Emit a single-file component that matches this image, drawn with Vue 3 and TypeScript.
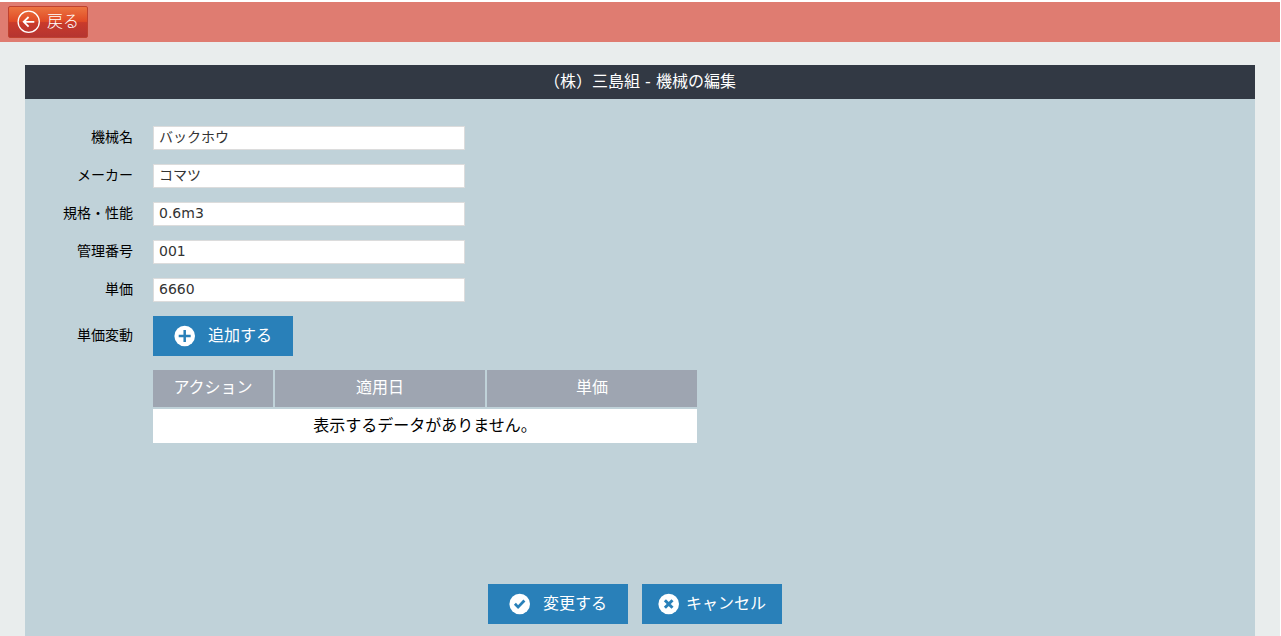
<script setup lang="ts">
import { reactive, ref } from 'vue'

interface Field {
  id: string
  label: string
  value: string
}

interface PriceChange {
  date: string
  price: string
}

const fields = reactive<Field[]>([
  { id: 'name', label: '機械名', value: 'バックホウ' },
  { id: 'maker', label: 'メーカー', value: 'コマツ' },
  { id: 'spec', label: '規格・性能', value: '0.6m3' },
  { id: 'number', label: '管理番号', value: '001' },
  { id: 'price', label: '単価', value: '6660' },
])

const changes = ref<PriceChange[]>([])
</script>

<template>
  <div class="page">
    <header class="topbar">
      <button type="button" class="back">
        <svg width="24" height="24" viewBox="0 0 24 24" fill="none" stroke="#fff" aria-hidden="true">
          <circle cx="11.7" cy="11.7" r="10.6" stroke-width="1.3" />
          <path d="M17.3 11.8H7M11.6 7L6.7 11.8l4.9 4.8" stroke-width="1.8" />
        </svg>
        <span>戻る</span>
      </button>
    </header>

    <main class="panel">
      <h1 class="title">（株）三島組 - 機械の編集</h1>
      <form class="form" @submit.prevent>
        <div class="fields">
          <div v-for="field in fields" :key="field.id" class="row">
            <label class="label" :for="field.id">{{ field.label }}</label>
            <input :id="field.id" v-model="field.value" class="input" type="text" />
          </div>
          <div class="row">
            <span id="changes-label" class="label">単価変動</span>
            <button type="button" class="button">
              <svg width="22" height="22" viewBox="0 0 22 22" aria-hidden="true">
                <circle cx="10.7" cy="11" r="10.3" fill="#fff" />
                <path d="M10.7 5v12M4.7 11h12" stroke="#2980b9" stroke-width="2.5" />
              </svg>
              <span>追加する</span>
            </button>
          </div>
          <table class="table" aria-labelledby="changes-label">
            <thead>
              <tr>
                <th class="action" scope="col">アクション</th>
                <th scope="col">適用日</th>
                <th scope="col">単価</th>
              </tr>
            </thead>
            <tbody>
              <tr v-for="(change, i) in changes" :key="i">
                <td></td>
                <td>{{ change.date }}</td>
                <td>{{ change.price }}</td>
              </tr>
              <tr v-if="changes.length === 0">
                <td colspan="3">表示するデータがありません。</td>
              </tr>
            </tbody>
          </table>
        </div>

        <div class="actions">
          <button type="submit" class="button">
            <svg width="22" height="22" viewBox="0 0 22 22" aria-hidden="true">
              <circle cx="10.7" cy="11" r="10.3" fill="#fff" />
              <path d="M5.9 10.8l3.2 3.3 6.3-6.6" fill="none" stroke="#2980b9" stroke-width="2.8" />
            </svg>
            <span>変更する</span>
          </button>
          <button type="button" class="button cancel">
            <svg width="22" height="22" viewBox="0 0 22 22" aria-hidden="true">
              <circle cx="10.7" cy="11" r="10.3" fill="#fff" />
              <path d="M6.9 7.2l7.6 7.6M14.5 7.2l-7.6 7.6" stroke="#2980b9" stroke-width="3" />
            </svg>
            <span>キャンセル</span>
          </button>
        </div>
      </form>
    </main>
  </div>
</template>

<style>
body {
  margin: 0;
  background: #fff;
}
</style>

<style scoped>
.page,
.page * {
  box-sizing: border-box;
}

.page {
  display: flex;
  flex-direction: column;
  min-height: 100vh;
  margin-right: 1px;
  border-top: 2px solid #fff;
  background: #e9eded;
  color: #000;
  font-family: "DejaVu Sans", "Noto Sans CJK JP", sans-serif;
  font-size: 16px;
  font-weight: 400;
  line-height: 24px;
}

button,
input {
  margin: 0;
  font: inherit;
}

.topbar {
  display: flex;
  align-items: center;
  height: 40px;
  padding: 0 8px;
  background: #df7c71;
}

.back {
  display: flex;
  align-items: center;
  gap: 6px;
  width: 80px;
  height: 32px;
  padding: 0 8px;
  border: 1px solid #c0412f;
  border-radius: 2px;
  background: linear-gradient(#ec7440 0%, #e04a26 48%, #c93a2b 52%, #b53531 100%);
  color: #fff;
  font-weight: 300;
}

.back svg,
.button svg {
  flex: none;
}

.back span {
  white-space: nowrap;
}

.panel {
  display: flex;
  flex: 1;
  flex-direction: column;
  margin: 23px 25px 0;
  background: #c0d2d9;
}

.title {
  margin: 0;
  padding: 5px 0;
  background: #323944;
  color: #fff;
  font-size: 16px;
  font-weight: 400;
  text-align: center;
}

.form {
  display: flex;
  flex: 1;
  flex-direction: column;
  justify-content: space-between;
  padding: 27px 0 12px;
}

.fields {
  display: flex;
  flex-direction: column;
  gap: 14px;
}

.row {
  display: flex;
  align-items: center;
  gap: 20px;
}

.label {
  width: 108px;
  padding-bottom: 2px;
  font-size: 14px;
  line-height: 22px;
  text-align: right;
}

.input {
  width: 312px;
  height: 24px;
  padding: 0 5px 2px;
  border: 1px solid #dcdcdc;
  border-radius: 0;
  background: #fff;
  color: #333;
  font-size: 14px;
}

.button {
  display: flex;
  align-items: center;
  justify-content: center;
  gap: 12px;
  width: 140px;
  height: 40px;
  padding: 0;
  border: 0;
  background: #2980b9;
  color: #fff;
}

.button.cancel {
  gap: 6px;
}

.table {
  width: 548px;
  margin: -2px 0 -2px 126px;
  border-collapse: separate;
  border-spacing: 2px;
  table-layout: fixed;
}

.table th {
  height: 37px;
  padding: 0 0 2px;
  background: #9ea5b1;
  color: #fff;
  font-weight: 400;
}

.table th.action {
  width: 120px;
}

.table td {
  height: 34px;
  padding: 0;
  background: #fff;
  text-align: center;
}

.actions {
  display: flex;
  justify-content: center;
  gap: 14px;
  padding-right: 10px;
}
</style>
